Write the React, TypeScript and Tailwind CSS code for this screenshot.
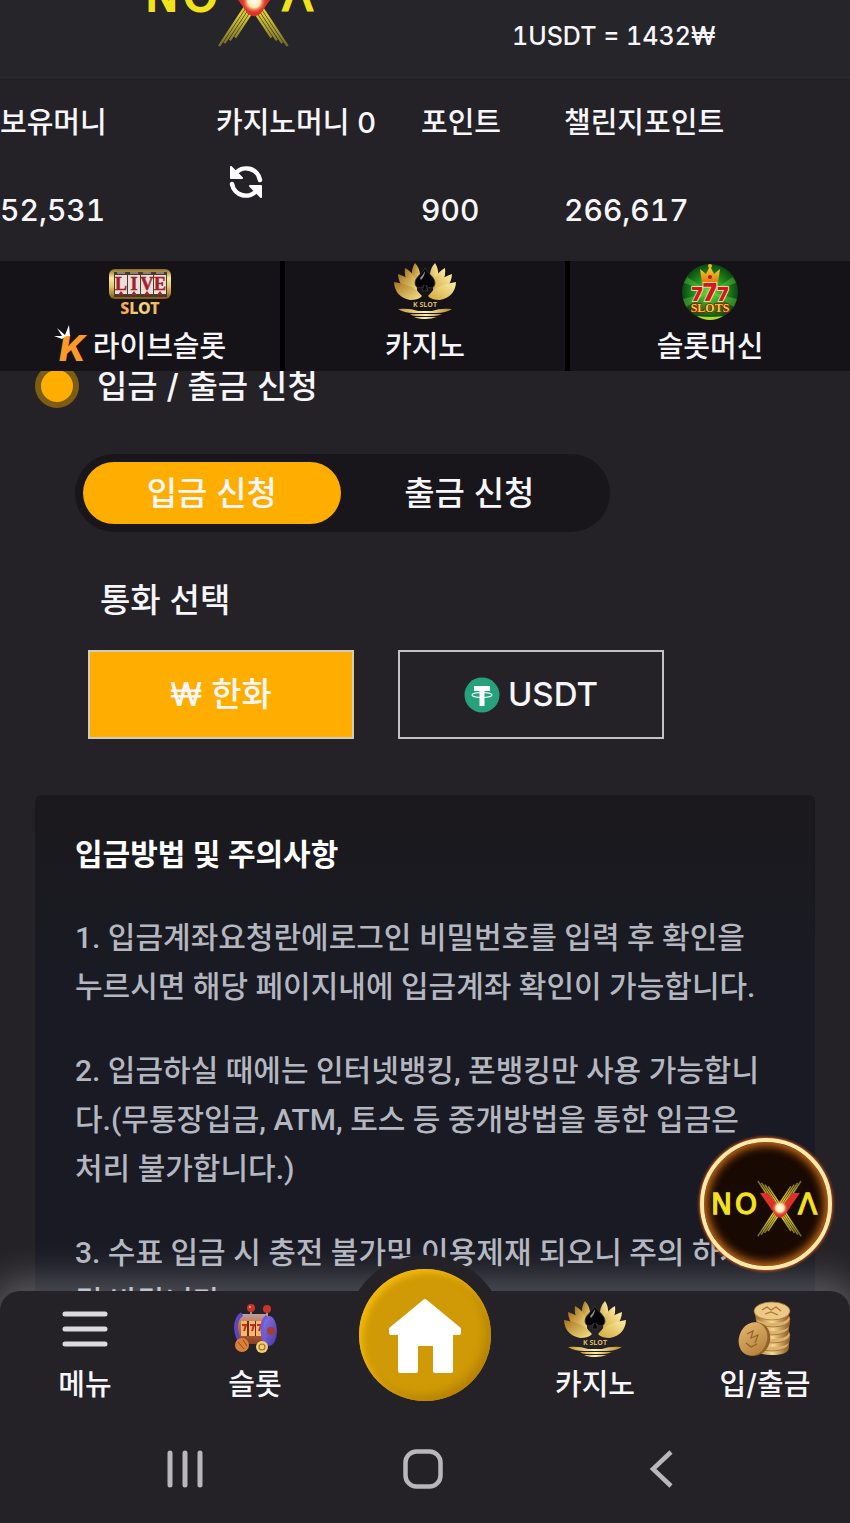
import React, { useState } from "react";

const SANS = "font-['Inter','Noto_Sans_CJK_KR',sans-serif]";
const BODY = "font-['Roboto','Noto_Sans_CJK_KR',sans-serif]";

function NovaLogo({ className, id }: { className: string; id: string }) {
  const rays = [0, 1, 2, 3];
  return (
    <svg viewBox="0 0 106 57" className={className} role="img" aria-label="NOVA">
      <defs>
        <linearGradient id={`${id}-ray`} x1="0" y1="0" x2="0" y2="57" gradientUnits="userSpaceOnUse">
          <stop offset="0" stopColor="#6b6428" />
          <stop offset="0.35" stopColor="#d8c832" />
          <stop offset="0.65" stopColor="#d8c832" />
          <stop offset="1" stopColor="#6b6428" />
        </linearGradient>
        <radialGradient id={`${id}-core`}>
          <stop offset="0" stopColor="#fff" />
          <stop offset="0.5" stopColor="#ffe9b0" />
          <stop offset="1" stopColor="#e63a20" stopOpacity="0" />
        </radialGradient>
      </defs>
      <g stroke={`url(#${id}-ray)`} strokeWidth="1.5" fill="none">
        {rays.map((r) => (
          <React.Fragment key={r}>
            <path d={`M${45 + r * 3.4} ${1 + r * 1.8}L${78 + r * 3.4} ${51 + r * 1.8}`} />
            <path d={`M${88 - r * 3.4} ${1 + r * 1.8}L${55 - r * 3.4} ${51 + r * 1.8}`} />
          </React.Fragment>
        ))}
      </g>
      <path d="M47 13h8l12 16l12-16h8L71 36q-4 3-8 0Z" fill="#dc3126" />
      <circle cx="67" cy="28" r="8" fill={`url(#${id}-core)`} />
      <g fill="#f2e21d" fontFamily="'DejaVu Sans', sans-serif" fontWeight="400" fontSize="28" stroke="#f2e21d" strokeWidth="1.3">
        <text x="-2" y="34">N</text>
        <text x="22" y="34">O</text>
        <text x="85" y="34">Λ</text>
      </g>
    </svg>
  );
}

function LiveSlotIcon() {
  return (
    <svg viewBox="0 0 64 50" className="h-[50px] w-16" aria-hidden="true">
      <defs>
        <linearGradient id="live-gold" x1="0" y1="0" x2="0" y2="1">
          <stop offset="0" stopColor="#8e6a25" />
          <stop offset="0.3" stopColor="#f8e9a4" />
          <stop offset="0.6" stopColor="#e3c263" />
          <stop offset="1" stopColor="#7a5718" />
        </linearGradient>
        <linearGradient id="live-word" x1="0" y1="0" x2="1" y2="0">
          <stop offset="0" stopColor="#f2a04a" />
          <stop offset="0.5" stopColor="#f6d984" />
          <stop offset="1" stopColor="#eab45a" />
        </linearGradient>
      </defs>
      <rect x="1" y="1" width="62" height="30" rx="6" fill="url(#live-gold)" />
      <rect x="6" y="4" width="53" height="25" fill="#4a3a2c" />
      {[7, 20, 33, 46].map((x) => (
        <g key={x}>
          <rect x={x} y="7" width="12" height="19" fill="#e9dfd8" />
          <path d={`M${x + 2} 4h8v2h-8z`} fill="#8d8078" />
          <path d={`M${x + 3} 27l3-4l3 4z`} fill="#a3202f" />
        </g>
      ))}
      <g fill="#a3202f" stroke="#a3202f" strokeWidth="0.5" fontFamily="'Liberation Serif', serif" fontWeight="700" fontSize="18" textAnchor="middle">
        <text x="13" y="22">L</text>
        <text x="26" y="22">I</text>
        <text x="39" y="22">V</text>
        <text x="52" y="22">E</text>
      </g>
      <text x="32" y="46" textAnchor="middle" fill="url(#live-word)" fontFamily="'Noto Sans', sans-serif" fontWeight="800" fontSize="16">SLOT</text>
    </svg>
  );
}

function LotusIcon({ id }: { id: string }) {
  return (
    <svg viewBox="0 0 62 56" className="h-14 w-[62px]" aria-hidden="true">
      <defs>
        <linearGradient id={`${id}-l`} x1="0" y1="0" x2="1" y2="1">
          <stop offset="0" stopColor="#a8721c" />
          <stop offset="1" stopColor="#f7e58a" />
        </linearGradient>
        <linearGradient id={`${id}-r`} x1="1" y1="0" x2="0" y2="1">
          <stop offset="0" stopColor="#fbf0a6" />
          <stop offset="1" stopColor="#d3a53a" />
        </linearGradient>
        <linearGradient id={`${id}-b`} x1="0" y1="0" x2="1" y2="0">
          <stop offset="0" stopColor="#c8942c" />
          <stop offset="0.5" stopColor="#fdf3b0" />
          <stop offset="1" stopColor="#b98422" />
        </linearGradient>
      </defs>
      <g fill={`url(#${id}-l)`}>
        <path d="M21 0Q30 10 23 24Q14 11 21 0Z" />
        <path d="M11 5Q23 11 23 27Q9 19 11 5Z" />
        <path d="M4 11Q20 16 24 30Q5 28 4 11Z" />
        <path d="M0 19Q19 21 28 33Q25 37 16 37Q1 34 0 19Z" />
      </g>
      <g fill={`url(#${id}-r)`}>
        <path d="M41 0Q32 10 39 24Q48 11 41 0Z" />
        <path d="M51 5Q39 11 39 27Q53 19 51 5Z" />
        <path d="M58 11Q42 16 38 30Q57 28 58 11Z" />
        <path d="M62 19Q43 21 34 33Q37 37 46 37Q61 34 62 19Z" />
      </g>
      <path d="M31 5C28 11 21 14 21 20C21 26 28 26 30 22L28 28H34L32 22C34 26 41 26 41 20C41 14 34 11 31 5Z" fill="#060608" stroke="#3a3a42" strokeWidth="0.8" />
      <path d="M26 15q3-3 5-7q0 5-4 9z" fill="#8a8a94" />
      <text x="31" y="44" textAnchor="middle" fill="#dcb861" fontFamily="'Open Sans', sans-serif" fontWeight="700" fontSize="7">K SLOT</text>
      <path d="M4 46Q16 45 24 48H38Q46 45 58 46Q52 50 42 50H20Q10 50 4 46Z" fill={`url(#${id}-b)`} />
      <path d="M16 51H48Q44 53 40 53H22Q18 53 16 51ZM20 54H43Q38 56 31 56T20 54Z" fill={`url(#${id}-b)`} />
    </svg>
  );
}

function SevensIcon() {
  return (
    <svg viewBox="0 0 58 58" className="h-[58px] w-[58px]" aria-hidden="true">
      <defs>
        <radialGradient id="sv-bg">
          <stop offset="0" stopColor="#6fe03a" />
          <stop offset="0.6" stopColor="#1f8a1c" />
          <stop offset="1" stopColor="#0a4a12" />
        </radialGradient>
        <linearGradient id="sv-gold" x1="0" y1="0" x2="0" y2="1">
          <stop offset="0" stopColor="#ffd23c" />
          <stop offset="1" stopColor="#d8790c" />
        </linearGradient>
      </defs>
      <circle cx="29" cy="29" r="28" fill="url(#sv-bg)" />
      <path d="M29 29L6 14l-3 6zM29 29L2 36l3 8zM29 29L52 14l3 6zM29 29L56 36l-3 8z" fill="#7be04a" opacity="0.35" />
      <path d="M19 6l6 5l4-8l4 8l6-5l-2 14H21Z" fill="url(#sv-gold)" />
      <circle cx="29" cy="3" r="2" fill="#ffb31c" />
      <circle cx="29" cy="14" r="2" fill="#c4161a" />
      <text x="29" y="38" textAnchor="middle" fill="#d5161c" stroke="#ffe7b8" strokeWidth="1.6" paintOrder="stroke" fontFamily="Inter, sans-serif" fontWeight="900" fontSize="19">
        7<tspan fontSize="24">7</tspan>7
      </text>
      <text x="29" y="49" textAnchor="middle" fill="#ffc83a" stroke="#8c1a0c" strokeWidth="1.5" paintOrder="stroke" fontFamily="'Liberation Serif', serif" fontWeight="700" fontSize="12">SLOTS</text>
      <path d="M16 53q13 2 26 0q-6 4-13 4t-13-4Z" fill="#b5d72a" />
    </svg>
  );
}

function CrownK() {
  return (
    <svg viewBox="0 0 35 37" className="mb-2 h-[37px] w-[35px]" aria-hidden="true">
      <text x="5" y="36" fill="#fb9a26" fontFamily="Inter, sans-serif" fontWeight="800" fontStyle="italic" fontSize="36">K</text>
      <path d="M8 14L0 11l8 0L3 3l8 7L15 0l1 11Q12 10 8 14Z" fill="#fff" />
    </svg>
  );
}

function SyncIcon() {
  return (
    <svg viewBox="0 0 34 34" className="h-[34px] w-[34px]" fill="none" stroke="#fff" strokeWidth="4.5" strokeLinecap="round" aria-hidden="true">
      <path d="M6 9A14 14 0 0 1 31 15" />
      <path d="M28 25A14 14 0 0 1 3 19" />
      <path d="M2 2v11h11Z" fill="#fff" strokeWidth="2" strokeLinejoin="round" />
      <path d="M32 32V21H21Z" fill="#fff" strokeWidth="2" strokeLinejoin="round" />
    </svg>
  );
}

function TetherIcon() {
  return (
    <svg viewBox="0 0 36 36" className="h-9 w-9" aria-hidden="true">
      <circle cx="18" cy="18" r="17.5" fill="#26a17b" />
      <path d="M10 9h16v5h-5.500v15h-5V14H10Z" fill="#fff" />
      <ellipse cx="18" cy="18" rx="10" ry="2.5" fill="none" stroke="#fff" strokeWidth="1.1" />
    </svg>
  );
}

function SlotCartIcon() {
  return (
    <svg viewBox="0 0 44 50" className="h-[50px] w-11" aria-hidden="true">
      <defs>
        <linearGradient id="cart-body" x1="0" y1="0" x2="0" y2="1">
          <stop offset="0" stopColor="#b9a0a8" />
          <stop offset="0.3" stopColor="#c97a4a" />
          <stop offset="1" stopColor="#8a3f23" />
        </linearGradient>
        <linearGradient id="cart-side" x1="0" y1="0" x2="1" y2="1">
          <stop offset="0" stopColor="#8d7be8" />
          <stop offset="1" stopColor="#4a37a8" />
        </linearGradient>
      </defs>
      <path d="M18 4v10M34 5v10" stroke="#b28a80" strokeWidth="2" />
      <circle cx="18" cy="4" r="4" fill="#c9352c" />
      <circle cx="34" cy="5" r="4" fill="#c9352c" />
      <circle cx="17" cy="3" r="1" fill="#f59a8a" />
      <path d="M8 10H35V40H8Q2 35 3 24Q4 13 8 10Z" fill="url(#cart-body)" />
      <path d="M9 10Q3 14 3 24Q4 34 8 38" fill="none" stroke="#5b46c4" strokeWidth="4" />
      <path d="M8 17h22v15h-22z" fill="#6a2a1c" />
      {[8, 16, 23].map((x) => (
        <g key={x}>
          <path d={`M${x} 17h6v15h-6z`} fill="#f5b769" />
          <path d={`M${x + 1} 21h4l-2 6`} fill="none" stroke="#c42e22" strokeWidth="2" />
        </g>
      ))}
      <ellipse cx="36" cy="27" rx="8" ry="15" fill="url(#cart-side)" />
      <path d="M34 12q-6 5-5 15q1 9 5 14" fill="none" stroke="#6f5bd6" strokeWidth="3" />
      <circle cx="38" cy="27" r="4" fill="#a63c34" />
      <circle cx="9" cy="41" r="7" fill="#d98039" />
      <path d="M5 38l6 7M10 36l4 6" stroke="#8f4a1e" strokeWidth="1" />
      <circle cx="29" cy="43" r="6" fill="#f2cf79" />
      <circle cx="29" cy="43" r="3" fill="none" stroke="#a5702c" strokeWidth="1.2" />
    </svg>
  );
}

function CoinsIcon() {
  return (
    <svg viewBox="0 0 54 56" className="h-14 w-[54px]" aria-hidden="true">
      <defs>
        <linearGradient id="coin-edge" x1="0" y1="0" x2="1" y2="0">
          <stop offset="0" stopColor="#9c6b2c" />
          <stop offset="0.5" stopColor="#f6d794" />
          <stop offset="1" stopColor="#8a5a22" />
        </linearGradient>
        <linearGradient id="coin-face" x1="0" y1="0" x2="1" y2="1">
          <stop offset="0" stopColor="#e6b970" />
          <stop offset="1" stopColor="#b07c38" />
        </linearGradient>
      </defs>
      {[42, 34, 26, 18, 10].map((y, i) => (
        <g key={y}>
          <path d={`M${17 + (i % 2)} ${y}v4q0 8 17 8t17-8v-4z`} fill="url(#coin-edge)" />
          <ellipse cx={34 + (i % 2)} cy={y} rx="17" ry="8" fill="#ddb36b" stroke="#8f6227" strokeWidth="0.7" />
        </g>
      ))}
      <ellipse cx="34" cy="10" rx="18" ry="9" fill="#ecc987" stroke="#a9772f" strokeWidth="0.8" />
      <path d="M24 9l5-3l4 3l5-3l5 4M27 13l6-2l7 3" fill="none" stroke="#a9772f" strokeWidth="1.2" />
      <ellipse cx="17" cy="38" rx="15" ry="17" transform="rotate(20 17 38)" fill="#8f6227" />
      <ellipse cx="15" cy="38" rx="14" ry="17" transform="rotate(20 15 38)" fill="url(#coin-face)" />
      <path d="M9 33l6-3l-2 7l7-3l-3 8M8 42l5 4l6-3" fill="none" stroke="#8f6227" strokeWidth="1.2" />
    </svg>
  );
}

function HomeIcon() {
  return (
    <svg viewBox="0 0 74 76" className="mt-0.5 h-[76px] w-[74px]" aria-hidden="true">
      <path d="M37 3L71 31V35H63V73H47V46H28V73H12V35H3V31Z" fill="#fff" stroke="#fff" strokeWidth="4" strokeLinejoin="round" />
    </svg>
  );
}

const balances = [
  { label: "보유머니", value: "52,531" },
  { label: "카지노머니 0", value: null },
  { label: "포인트", value: "900" },
  { label: "챌린지포인트", value: "266,617" },
];

const notices = [
  ["1. 입금계좌요청란에로그인 비밀번호를 입력 후 확인을", "누르시면 해당 페이지내에 입금계좌 확인이 가능합니다."],
  ["2. 입금하실 때에는 인터넷뱅킹, 폰뱅킹만 사용 가능합니", "다.(무통장입금, ATM, 토스 등 중개방법을 통한 입금은", "처리 불가합니다.)"],
  ["3. 수표 입금 시 충전 불가및 이용제재 되오니 주의 하시", "길 바랍니다."],
];

function NavItem({ label, children }: { label: string; children: React.ReactNode }) {
  return (
    <a href="#" className="flex flex-col items-center pt-2.5">
      <span className="flex h-14 items-center justify-center">{children}</span>
      <span className="mt-1.5 text-[29px] leading-[44px]">{label}</span>
    </a>
  );
}

export default function App() {
  const [tab, setTab] = useState<"in" | "out">("in");
  const [currency, setCurrency] = useState<"krw" | "usdt">("krw");
  return (
    <div lang="ko" className={`${SANS} relative flex h-screen flex-col overflow-hidden bg-[#252227] font-medium text-[#f7f6fa]`}>
      <header className="flex h-[78px] shrink-0 items-start overflow-hidden border-b border-[#2a292e] bg-[#26262a] pl-[148px]">
        <NovaLogo id="top" className="-mt-[43px] h-[90px] w-[168px] shrink-0" />
        <p className="ml-[196px] text-[25px] leading-[72px] whitespace-nowrap tabular-nums">1USDT = 1432₩</p>
      </header>

      <dl className="grid h-[183px] shrink-0 grid-cols-[216fr_205fr_143fr_286fr] bg-[#242127] pt-[22px] text-[29px]">
        {balances.map((b) => (
          <div key={b.label} className="whitespace-nowrap">
            <dt className="leading-[46px]">{b.label}</dt>
            {b.value ? (
              <dd className="mt-[42px] text-[30px] leading-[44px] tabular-nums">{b.value}</dd>
            ) : (
              <dd className="mt-[19px] pl-[13px]">
                <button type="button" aria-label="새로고침" className="block">
                  <SyncIcon />
                </button>
              </dd>
            )}
          </div>
        ))}
      </dl>

      <nav className="z-10 grid h-[110px] shrink-0 grid-cols-3 gap-[5px] bg-black text-[29px] leading-[44px]">
        <a href="#" className="flex flex-col items-center bg-[#151318]">
          <span className="flex h-16 items-center"><LiveSlotIcon /></span>
          <span className="flex h-11 items-center gap-1">
            <CrownK />
            라이브슬롯
          </span>
        </a>
        <a href="#" className="flex flex-col items-center bg-[#151318]">
          <span className="flex h-16 items-start pt-0.5"><LotusIcon id="lotus-top" /></span>
          <span>카지노</span>
        </a>
        <a href="#" className="flex flex-col items-center bg-[#151318]">
          <span className="flex h-16 items-start pt-0.5"><SevensIcon /></span>
          <span>슬롯머신</span>
        </a>
      </nav>

      <main className="min-h-0 flex-1 overflow-hidden px-[35px]">
        <h1 className="-mt-[9px] flex items-center gap-[18px] text-[33px] leading-[48px]">
          <span className="h-11 w-11 rounded-full border-[6px] border-[#7d5c14] bg-[#ffae00]" />
          입금 / 출금 신청
        </h1>

        <div className="mt-11 ml-10 flex w-[535px] max-w-full rounded-full bg-[#18161a] p-2 pr-3 text-[33px] leading-[62px]">
          <button type="button" onClick={() => setTab("in")} className={`flex-1 rounded-full ${tab === "in" ? "bg-[#ffae00]" : ""}`}>
            입금 신청
          </button>
          <button type="button" onClick={() => setTab("out")} className={`flex-1 rounded-full ${tab === "out" ? "bg-[#ffae00]" : ""}`}>
            출금 신청
          </button>
        </div>

        <h2 className="mt-11 ml-[65px] text-[33px] leading-[48px]">통화 선택</h2>

        <div className="mt-[26px] ml-[53px] grid w-[576px] max-w-full grid-cols-2 gap-11 text-[33px]">
          <button
            type="button"
            onClick={() => setCurrency("krw")}
            className={`flex h-[89px] items-center justify-center border-2 border-[#d0cbbf] ${currency === "krw" ? "bg-[#ffae00]" : ""}`}
          >
            ₩ 한화
          </button>
          <button
            type="button"
            onClick={() => setCurrency("usdt")}
            className={`flex h-[89px] items-center justify-center gap-2 border-2 border-[#c4c2c7] ${currency === "usdt" ? "bg-[#ffae00]" : ""}`}
          >
            <TetherIcon />
            USDT
          </button>
        </div>

        <section className={`${BODY} mt-14 rounded-md bg-linear-to-b from-[#1b191d] to-[#191a23] to-30% px-10 pt-9 pb-16 text-[30px] leading-[49px] whitespace-nowrap text-[#b4b7c0]`}>
          <h3 className="leading-[47px] font-bold text-white">입금방법 및 주의사항</h3>
          {notices.map((lines) => (
            <p key={lines[0]} className="mt-[35px]">
              {lines.map((line) => (
                <span key={line} className="block">{line}</span>
              ))}
            </p>
          ))}
        </section>
      </main>

      <footer className="relative z-10 h-[232px] shrink-0 rounded-t-[20px] bg-[#242226] shadow-[0_-4px_36px_8px_rgba(255,255,255,0.26)]">
        <span className="absolute -top-9 left-1/2 h-40 w-40 -translate-x-1/2 rounded-full bg-[#242226]" />
        <nav className="relative grid h-[120px] grid-cols-5">
          <NavItem label="메뉴">
            <svg viewBox="0 0 46 38" className="h-[38px] w-[46px]" stroke="#dcdadf" strokeWidth="5" strokeLinecap="round" aria-hidden="true">
              <path d="M3 4h40M3 19h40M3 34h40" />
            </svg>
          </NavItem>
          <NavItem label="슬롯"><SlotCartIcon /></NavItem>
          <a
            href="#"
            aria-label="홈"
            className="-mt-[22px] flex h-[132px] w-[132px] items-center justify-center justify-self-center rounded-full bg-[#cf9a05] shadow-[inset_4px_4px_6px_#f2b90c,inset_-5px_-5px_8px_#b58204]"
          >
            <HomeIcon />
          </a>
          <NavItem label="카지노"><LotusIcon id="lotus-nav" /></NavItem>
          <NavItem label="입/출금"><CoinsIcon /></NavItem>
        </nav>
        <div className="grid h-[116px] grid-cols-3 items-center justify-items-center pr-[70px] pl-[66px]">
          <button type="button" aria-label="최근 앱">
            <svg viewBox="0 0 38 38" className="h-[38px] w-[38px]" stroke="#b9b7bc" strokeWidth="5" strokeLinecap="round">
              <path d="M4 3v32M19 3v32M34 3v32" />
            </svg>
          </button>
          <button type="button" aria-label="홈 화면">
            <svg viewBox="0 0 40 40" className="h-10 w-10" fill="none" stroke="#b9b7bc" strokeWidth="4.5">
              <rect x="2.5" y="2.5" width="35" height="35" rx="11" />
            </svg>
          </button>
          <button type="button" aria-label="뒤로">
            <svg viewBox="0 0 24 38" className="h-[38px] w-6" fill="none" stroke="#b9b7bc" strokeWidth="4.5">
              <path d="M22 2L4 19L22 36" />
            </svg>
          </button>
        </div>
      </footer>

      <a
        href="#"
        aria-label="NOVA"
        className="absolute right-[18px] bottom-[253px] z-20 flex h-[132px] w-[132px] items-center justify-center rounded-full border-4 border-[#ffe9a8] bg-[#180902] pt-2 shadow-[inset_0_0_10px_3px_#d8741c,0_0_3px_1px_#c8571c]"
      >
        <NovaLogo id="float" className="h-[57px] w-[106px]" />
      </a>
    </div>
  );
}
